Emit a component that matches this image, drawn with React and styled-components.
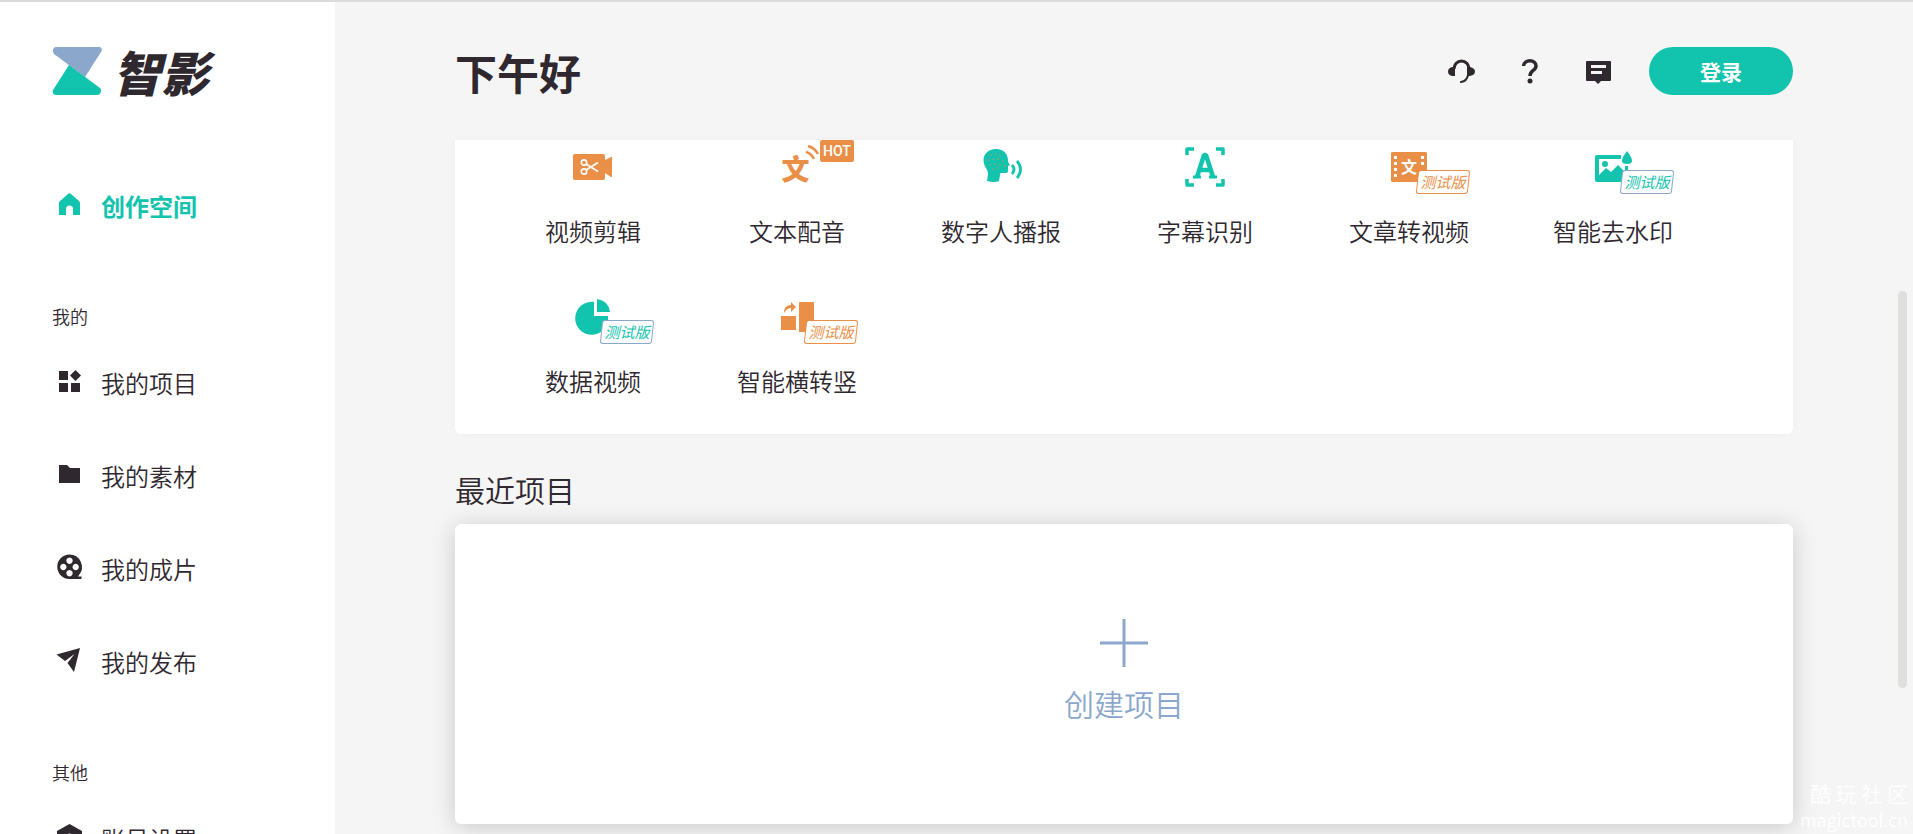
import styled, { createGlobalStyle } from 'styled-components';

const colors = {
  teal: '#12c3ae',
  orange: '#ea8f47',
  blue: '#8ba8cc',
  dark: '#2f282f',
  page: '#f5f5f5',
};

const GlobalStyle = createGlobalStyle`
  * {
    box-sizing: border-box;
  }

  body {
    margin: 0;
    background: ${colors.page};
    color: ${colors.dark};
    font-family: "Noto Sans CJK SC", sans-serif;
    font-weight: 350;
  }

  h1, h2, ul {
    margin: 0;
    padding: 0;
  }

  ul {
    list-style: none;
  }

  a {
    color: inherit;
    text-decoration: none;
  }

  button {
    border: none;
    padding: 0;
    background: none;
    color: inherit;
    font: inherit;
    cursor: pointer;
  }

  svg {
    display: block;
    flex: none;
    overflow: visible;
  }
`;

const Container = styled.div`
  position: relative;
  display: flex;
  height: 100vh;
  border-top: 2px solid #dcdbda;
  overflow: hidden;
`;

const Sidebar = styled.aside`
  flex: none;
  width: 335px;
  padding: 45px 52px 0;
  background: #fff;
  overflow: hidden;
`;

const Logo = styled.a`
  display: flex;
  align-items: center;
  gap: 11px;
  height: 48px;
  margin-bottom: 65px;
  font-size: 48px;
  font-weight: 900;
  font-style: italic;
  line-height: 44px;
`;

const MenuTitle = styled.h2`
  margin: 49px 0 7px;
  font-size: 18px;
  font-weight: 350;
  line-height: 28px;
`;

const MenuLink = styled.a`
  display: flex;
  align-items: center;
  gap: 20px;
  height: 93px;
  padding: 0 0 2px 5px;
  color: ${({ $active }) => ($active ? colors.teal : colors.dark)};
  font-size: 24px;
  font-weight: ${({ $active }) => ($active ? 700 : 350)};

  svg {
    margin-bottom: 4px;
  }
`;

const Main = styled.main`
  flex: 1;
  min-width: 0;
  padding-inline: 120px;
`;

const Header = styled.header`
  display: flex;
  justify-content: space-between;
  align-items: center;
  height: 138px;
`;

const Greeting = styled.h1`
  font-size: 42px;
  font-weight: 700;
`;

const Actions = styled.div`
  display: flex;
  align-items: center;
  gap: 36px;
`;

const IconButton = styled.button`
  display: flex;
  justify-content: flex-end;
  width: 33px;
`;

const LoginButton = styled.button`
  width: 144px;
  height: 48px;
  border-radius: 24px;
  background: ${colors.teal};
  color: #fff;
  font-size: 21px;
  font-weight: 700;
`;

const Tools = styled.ul`
  display: flex;
  flex-wrap: wrap;
  row-gap: 49px;
  padding: 7px 36px 36px;
  border-radius: 0 0 6px 6px;
  background: #fff;
  box-shadow: 0 0 8px rgba(0, 0, 0, .04);
`;

const Tool = styled.li`
  width: 204px;

  a {
    display: flex;
    flex-direction: column;
    align-items: center;
    gap: 27px;
    font-size: 24px;
    line-height: 34px;
  }
`;

const ToolIcon = styled.span`
  position: relative;
  color: ${({ $color }) => $color};
`;

const HotBadge = styled.span`
  position: absolute;
  top: -7px;
  left: 43px;
  width: 34px;
  border-radius: 2px;
  background: ${colors.orange};
  color: #fff;
  font: 500 14px/22px Roboto, sans-serif;
  text-align: center;
`;

const BetaBadge = styled.span`
  position: absolute;
  top: 23px;
  left: 28px;
  width: 52px;
  font-size: 15px;
  font-style: italic;
  font-weight: 400;
  line-height: 24px;
  text-align: center;
  isolation: isolate;

  &::before {
    content: '';
    position: absolute;
    inset: 0;
    z-index: -1;
    border: 1px solid ${({ $border }) => $border};
    border-radius: 3px;
    background: #fff;
    transform: skewX(-6deg);
  }
`;

const SectionTitle = styled.h2`
  margin: 33px 0 13px;
  font-size: 30px;
  font-weight: 350;
  line-height: 44px;
`;

const CreateButton = styled.button`
  display: flex;
  flex-direction: column;
  align-items: center;
  justify-content: center;
  gap: 14px;
  width: 100%;
  height: 300px;
  padding-bottom: 4px;
  border-radius: 6px;
  background: #fff;
  box-shadow: 0 3px 24px rgba(0, 0, 0, .18);
  color: ${colors.blue};
  font-size: 30px;
  line-height: 44px;
`;

const ScrollThumb = styled.div`
  position: absolute;
  top: 289px;
  right: 6px;
  width: 9px;
  height: 397px;
  border-radius: 5px;
  background: #dfdfde;
`;

const Watermark = styled.div`
  position: absolute;
  right: 5px;
  bottom: 2px;
  color: #fff;
  font-size: 18px;
  line-height: 26px;
  text-align: right;
`;

const WatermarkName = styled.div`
  font-size: 21px;
`;

const menuIcons = {
  home: (
    <path d="M11 2a2 2 0 0 1 3 0l8 7a3 3 0 0 1 1 2v12h-7v-6a3.500 3.500 0 0 0-7 0v6H2V11a3 3 0 0 1 1-2z" />
  ),
  projects: (
    <path d="M2 2h9v9H2zM2 14h9v9H2zM14 14h9v9h-9zM18.500 1l5.500 5.500-5.500 5.500-5.500-5.500z" />
  ),
  materials: <path d="M2 3h8l3 3h10v15H2z" />,
  films: (
    <path
      fillRule="evenodd"
      d="M12.500-.5a12.500 12.500 0 0 1 9.500 20.500l-1 1.500h3.500v2.500h-12a12.250 12.250 0 0 1 0-24.500zM12.500 2.500a3.200 3.200 0 1 0 .01 0zM12.500 15a3.200 3.200 0 1 0 .01 0zM6.300 8.800a3.200 3.200 0 1 0 .01 0zM18.700 8.800a3.200 3.200 0 1 0 .01 0z"
    />
  ),
  publish: <path d="M-.5 6.500L23 0 17 24l-6.500-9L17.500 6 8 13z" />,
  account: (
    <path
      fillRule="evenodd"
      d="M12.500-1L25 6v14l-12.500 7L0 20V6zM12.500 8.500a4.500 4.500 0 1 0 .01 0z"
    />
  ),
};

function MenuItem({ icon, active, children }) {
  return (
    <li>
      <MenuLink href="#" $active={active}>
        <svg width="24" height="24" fill="currentColor" aria-hidden="true">
          {menuIcons[icon]}
        </svg>
        {children}
      </MenuLink>
    </li>
  );
}

function LogoMark() {
  return (
    <svg width="50" height="48" aria-hidden="true">
      <path fill={colors.blue} d="M4 0h42a3 3 0 0 1 3 5L33 30 2 7C0 4 1 0 4 0z" />
      <path fill={colors.teal} d="M17 18l31 23c2 2 1 7-3 7H4c-3 0-4-3-3-5z" />
    </svg>
  );
}

const glyph = {
  fontFamily: '"Noto Sans CJK SC", sans-serif',
  textAnchor: 'middle',
  fill: 'currentColor',
};

const toolIcons = {
  cut: (
    <>
      <path fill="currentColor" d="M2 7h28a2 2 0 0 1 2 2v4l6-3h1v20h-1l-6-4v5a2 2 0 0 1-2 2H2a2 2 0 0 1-2-2V9a2 2 0 0 1 2-2z" />
      <g fill="none" stroke="#fff" strokeWidth="1.700">
        <circle cx="11" cy="15.500" r="2.700" />
        <circle cx="11" cy="24.500" r="2.700" />
        <path d="M13 17l12 7.500M13 23l12-7.500" />
      </g>
    </>
  ),
  dub: (
    <>
      <text x="18.500" y="33" fontSize="28" fontWeight="900" {...glyph}>文</text>
      <path fill="none" stroke="currentColor" strokeWidth="2.500" d="M31-1q7 2 10 8M29 5q5 1 8 7" />
    </>
  ),
  speak: (
    <>
      <path fill="currentColor" d="M15 2c8 0 12 5 12 12v1l2 3-2 1v5q0 2-3 2h-4q-1 0-1 2l-1 6q-4 2-12 0l1-7q0-3-2-6C-1 11 5 2 15 2z" />
      <g fill={colors.orange}>
        {[[10, 8], [15, 7], [19, 9], [7, 13], [12, 12], [17, 12], [22, 14], [9, 18], [14, 17], [19, 18], [24, 19], [12, 22], [17, 21]].map(([x, y]) => (
          <circle key={`${x}-${y}`} cx={x} cy={y} r=".7" />
        ))}
      </g>
      <path fill="none" stroke="currentColor" strokeWidth="2.800" d="M31 18q4 4.500 0 9M36 14q7 8.500 0 17" />
    </>
  ),
  caption: (
    <>
      <path fill="none" stroke="currentColor" strokeWidth="3.500" strokeLinejoin="round" d="M2 8V2h7M31 2h7v6M38 32v6h-7M9 38H2v-6" />
      <path
        fill="none"
        stroke="currentColor"
        strokeWidth="4.500"
        strokeLinejoin="bevel"
        d="M12 30L19 8h2l7 22M15 23h10"
      />
      <path stroke="currentColor" strokeWidth="3" d="M8 30h8M24 30h8" />
    </>
  ),
  article: (
    <>
      <rect x="2" y="5" width="36" height="30" rx="1.500" fill="currentColor" />
      <path fill="#fff" d="M5 9h3v3H5zM5 15h3v3H5zM5 21h3v3H5zM5 27h3v3H5zM32 9h3v3h-3zM32 15h3v3h-3z" />
      <text x="20" y="26" fontSize="16" fontWeight="700" {...glyph} fill="#fff">文</text>
    </>
  ),
  watermark: (
    <>
      <path fill="currentColor" d="M4 8h24v4H6v16l7-7 5 4 7-7 6 6v11H4a2 2 0 0 1-2-2V10a2 2 0 0 1 2-2z" />
      <path fill="currentColor" d="M32 19h3v5h-3zM34 4q10 13 0 13T34 4z" />
      <circle cx="12" cy="17" r="3" fill="currentColor" />
    </>
  ),
  chart: (
    <path fill="currentColor" d="M21 5v14h14A16.500 16.500 0 1 1 21 5zM24 2q12 2 13 13H24z" />
  ),
  rotate: (
    <path fill="currentColor" d="M4 19h15v14H4zM23 5h13a1 1 0 0 1 1 1v29H22V6a1 1 0 0 1 1-1zM7 16q0-8 7-8V5l5 5-5 5v-4q-4 0-7 5z" />
  ),
};

const tools = [
  { name: '视频剪辑', icon: 'cut', color: colors.orange },
  {
    name: '文本配音', icon: 'dub', color: colors.orange, hot: true,
  },
  { name: '数字人播报', icon: 'speak', color: colors.teal },
  { name: '字幕识别', icon: 'caption', color: colors.teal },
  {
    name: '文章转视频', icon: 'article', color: colors.orange, beta: true,
  },
  {
    name: '智能去水印', icon: 'watermark', color: colors.teal, beta: true,
  },
  {
    name: '数据视频', icon: 'chart', color: colors.teal, beta: true,
  },
  {
    name: '智能横转竖', icon: 'rotate', color: colors.orange, beta: true,
  },
];

export default function App() {
  return (
    <>
      <GlobalStyle />
      <Container>
        <Sidebar>
          <Logo href="#">
            <LogoMark />
            智影
          </Logo>
          <nav>
            <ul>
              <MenuItem icon="home" active>创作空间</MenuItem>
            </ul>
            <MenuTitle>我的</MenuTitle>
            <ul>
              <MenuItem icon="projects">我的项目</MenuItem>
              <MenuItem icon="materials">我的素材</MenuItem>
              <MenuItem icon="films">我的成片</MenuItem>
              <MenuItem icon="publish">我的发布</MenuItem>
            </ul>
            <MenuTitle>其他</MenuTitle>
            <ul>
              <MenuItem icon="account">账号设置</MenuItem>
            </ul>
          </nav>
        </Sidebar>
        <Main>
          <Header>
            <Greeting>下午好</Greeting>
            <Actions>
              <IconButton type="button" aria-label="客服">
                <svg width="28" height="28" fill="currentColor">
                  <path d="M8 10v9H5q-4-1-4-4.500T5 10zM20 10v9h3q5-1 5-4.500T23 10z" />
                  <path fill="none" stroke="currentColor" strokeWidth="3" d="M7 12a7.500 8 0 0 1 15 0" />
                  <path fill="none" stroke="currentColor" strokeWidth="2" strokeLinecap="round" d="M21 18q-1 6-7 7" />
                </svg>
              </IconButton>
              <IconButton type="button" aria-label="帮助">
                <svg width="28" height="28" fill="currentColor">
                  <path fill="none" stroke="currentColor" strokeWidth="3.500" d="M7.500 9C8 2 20 2 20 9c0 5-6 4-6 10" />
                  <circle cx="14" cy="24" r="2.500" />
                </svg>
              </IconButton>
              <IconButton type="button" aria-label="消息">
                <svg width="28" height="28" fill="currentColor">
                  <path fillRule="evenodd" d="M2 4h23a1 1 0 0 1 1 1v18a1 1 0 0 1-1 1h-9l-3 3-3-3H2a1 1 0 0 1-1-1V5a1 1 0 0 1 1-1zM6 8v3h15V8zM6 14v3h11v-3z" />
                </svg>
              </IconButton>
              <LoginButton type="button">登录</LoginButton>
            </Actions>
          </Header>
          <Tools>
            {tools.map(({
              name, icon, color, hot, beta,
            }) => (
              <Tool key={name}>
                <a href="#">
                  <ToolIcon $color={color}>
                    <svg width="40" height="40" aria-hidden="true">
                      {toolIcons[icon]}
                    </svg>
                    {hot && <HotBadge>HOT</HotBadge>}
                    {beta && (
                      <BetaBadge $border={color === colors.teal ? colors.blue : color}>
                        测试版
                      </BetaBadge>
                    )}
                  </ToolIcon>
                  {name}
                </a>
              </Tool>
            ))}
          </Tools>
          <SectionTitle>最近项目</SectionTitle>
          <CreateButton type="button">
            <svg width="48" height="48" stroke="currentColor" strokeWidth="3" aria-hidden="true">
              <path d="M24 0v48M0 24h48" />
            </svg>
            创建项目
          </CreateButton>
        </Main>
        <ScrollThumb />
        <Watermark>
          <WatermarkName>酷 玩 社 区</WatermarkName>
          magictool.cn
        </Watermark>
      </Container>
    </>
  );
}
